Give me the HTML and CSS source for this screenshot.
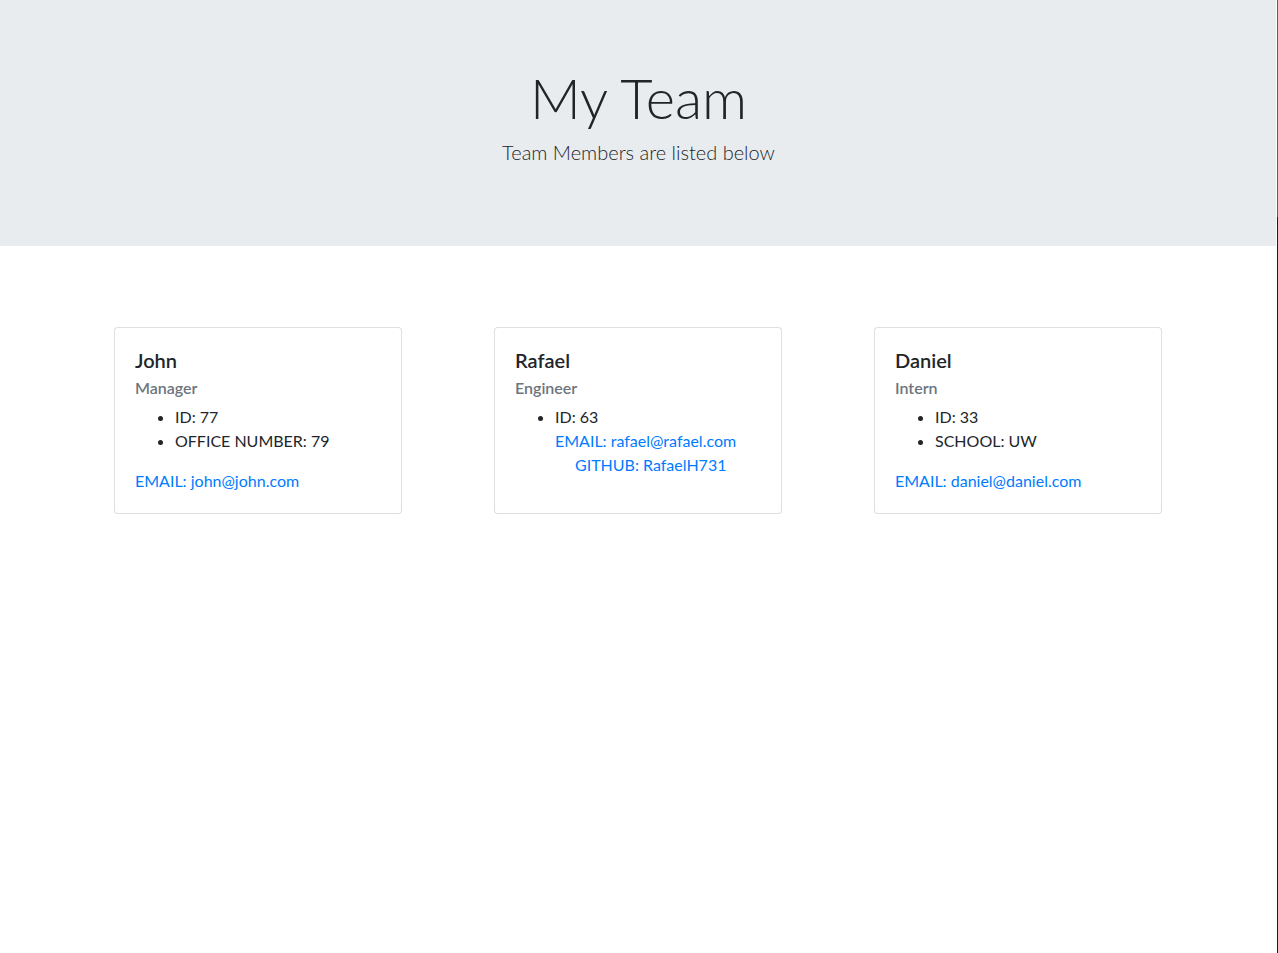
FILE: index.html
```html
<!DOCTYPE html>
<html lang="en">
<head>
<meta charset="utf-8">
<title>My Team</title>
<link rel="stylesheet" href="styles.css">
</head>
<body>
<header class="jumbotron">
  <h1 class="display">My Team</h1>
  <p class="lead">Team Members are listed below</p>
</header>
<main class="container">
  <div class="row">
    <div class="col">
      <div class="card">
        <div class="card-body">
          <h5 class="card-title">John</h5>
          <h6 class="card-subtitle">Manager</h6>
          <ul class="card-list">
            <li>ID: 77</li>
            <li>OFFICE NUMBER: 79</li>
          </ul>
          <a class="card-link" href="#">EMAIL: john@john.com</a>
        </div>
      </div>
    </div>
    <div class="col">
      <div class="card">
        <div class="card-body">
          <h5 class="card-title">Rafael</h5>
          <h6 class="card-subtitle">Engineer</h6>
          <ul class="card-list">
            <li>ID: 63</li>
            <a class="card-link block" href="#">EMAIL: rafael@rafael.com</a>
            <a class="card-link block indent" href="#">GITHUB: RafaelH731</a>
          </ul>
        </div>
      </div>
    </div>
    <div class="col">
      <div class="card">
        <div class="card-body">
          <h5 class="card-title">Daniel</h5>
          <h6 class="card-subtitle">Intern</h6>
          <ul class="card-list">
            <li>ID: 33</li>
            <li>SCHOOL: UW</li>
          </ul>
          <a class="card-link" href="#">EMAIL: daniel@daniel.com</a>
        </div>
      </div>
    </div>
  </div>
</main>
<div class="edge"></div>
</body>
</html>
```
FILE: styles.css
```css
* { box-sizing: border-box; }
html, body {
  margin: 0;
  padding: 0;
}
body {
  margin-right: 2px;
  font-family: Lato, "Open Sans", "Liberation Sans", sans-serif;
  font-size: 16px;
  line-height: 1.5;
  color: #212529;
  background: #fff;
}
.jumbotron {
  background: #e9ecef;
  padding: 64px 0 79px;
  margin-right: -1px;
  text-align: center;
}
.display {
  margin: 0 0 6px;
  font-size: 56px;
  font-weight: 300;
  line-height: 1.2;
}
.lead {
  margin: 0;
  font-size: 20px;
  font-weight: 300;
  line-height: 1.5;
}
.container {
  width: 1140px;
  margin: 81px auto 0;
  padding: 0 15px;
}
.row {
  display: flex;
  margin: 0 -15px;
}
.col {
  flex: 1 1 0;
  padding: 0 15px;
  display: flex;
  justify-content: center;
}
.card {
  width: 288px;
  border: 1px solid rgba(0,0,0,.125);
  border-radius: 4px;
  background: #fff;
  align-self: flex-start;
}
.card-body {
  padding: 20px;
}
.card-title {
  margin: 0 0 12px;
  font-size: 20px;
  font-weight: 600;
  line-height: 1.2;
}
.card-subtitle {
  margin: -6px 0 8px;
  font-size: 16px;
  font-weight: 600;
  line-height: 1.2;
  color: #6c757d;
}
.card-list {
  margin: 0 0 16px;
  padding-left: 40px;
}
.card-link {
  color: #007bff;
  text-decoration: none;
}
.block { display: block; }
.indent { padding-left: 20px; }
.edge {
  position: fixed;
  top: 0;
  right: 0;
  bottom: 0;
  width: 1px;
  background: linear-gradient(#5c5e60 0 217px, #1c1c1c 217px);
}
```
